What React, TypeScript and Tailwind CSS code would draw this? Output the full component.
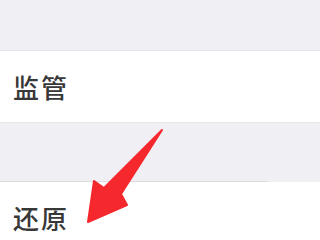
import * as React from "react"

function Row({ label }: { label: string }) {
  return (
    <div className="flex h-[71px] items-center bg-white pl-[13px]">
      <span className="text-[26px] font-medium leading-none tracking-[2px] text-[#383838] [font-family:'Noto_Sans_CJK_SC',sans-serif]">
        {label}
      </span>
    </div>
  )
}

export default function App() {
  return (
    <div className="relative h-[240px] w-[320px] overflow-hidden bg-white">
      <div className="h-[51px] border-b border-[#e4e4e8] bg-[#efeff4]" />
      <Row label="监管" />
      <div className="flex h-[60px] flex-col justify-end border-t border-[#e8e8ec] bg-[#efeff4]">
        <div className="h-px w-[268px] bg-[#dcdce0]" />
      </div>
      <Row label="还原" />
      <svg className="absolute left-0 top-0" width="320" height="240" viewBox="0 0 320 240">
        <polygon
          points="162,130 121,194 127,205 88,222 94,181 104,188"
          fill="#f5282d"
          stroke="#f5282d"
          strokeWidth="2"
          strokeLinejoin="round"
        />
      </svg>
    </div>
  )
}
